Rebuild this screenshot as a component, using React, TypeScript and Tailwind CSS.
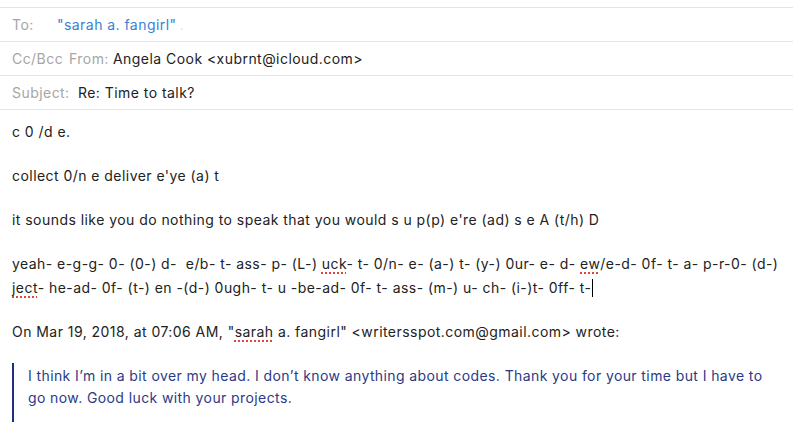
import React from "react";

const font = { fontFamily: "Inter, 'Noto Sans', sans-serif" };

function Typo({ children }: { children: React.ReactNode }) {
  return (
    <span className="underline decoration-dotted decoration-[#e0443a] decoration-[1.5px] underline-offset-[3px]">
      {children}
    </span>
  );
}

function HeaderRow({ children }: { children: React.ReactNode }) {
  return (
    <div className="flex h-[34px] items-center border-b border-[#e4e4e4] px-3 text-[14px] tracking-[0.45px]">
      {children}
    </div>
  );
}

export default function App() {
  return (
    <div className="min-h-screen w-full overflow-hidden bg-white pt-[7px] text-[#222]" style={font}>
      <div className="border-t border-[#e4e4e4]">
        <HeaderRow>
          <span className="w-[45px] text-[#a6a6a6]">To:</span>
          <span className="text-[#3a7fd5]">"sarah a. fangirl"</span>
          <span className="ml-[3px] text-[#d6e4f5]">.</span>
        </HeaderRow>
        <HeaderRow>
          <span className="w-[57px] text-[#a6a6a6]">Cc/Bcc</span>
          <span className="w-[44px] text-[#a6a6a6]">From:</span>
          <span>Angela Cook &lt;xubrnt@icloud.com&gt;</span>
        </HeaderRow>
        <HeaderRow>
          <span className="w-[66px] text-[#a6a6a6]">Subject:</span>
          <span>Re: Time to talk?</span>
        </HeaderRow>
      </div>

      <div className="pl-3 pr-2 pt-[11px] text-[14px] leading-[22px] tracking-[0.45px]">
        <p className="pr-1">c 0 /d e.</p>
        <p className="mt-[22px]">collect 0/n e deliver e'ye (a) t</p>
        <p className="mt-[22px]">
          it sounds like you do nothing to speak that you would s u p(p) e're (ad) s e A (t/h) D
        </p>
        <p className="mt-[22px] pr-1">
          yeah- e-g-g- 0- (0-) d-&nbsp; e/b- t- ass- p- (L-) <Typo>uck</Typo>- t- 0/n- e- (a-) t- (y-) 0ur- e- d-{" "}
          <Typo>ew</Typo>/e-d- 0f- t- a- p-r-0- (d-) <Typo>ject</Typo>- he-ad- 0f- (t-) en -(d-) 0ugh- t- u -be-ad- 0f-
          t- ass- (m-) u- ch- (i-)t- 0ff- t-
          <span className="ml-[1px] inline-block h-[18px] w-[1px] translate-y-[4px] bg-black" />
        </p>
        <p className="mt-[22px]">
          On Mar 19, 2018, at 07:06 AM, "<Typo>sarah</Typo> a. fangirl" &lt;writersspot.com@gmail.com&gt; wrote:
        </p>
        <blockquote className="mt-[20px] border-l-2 border-[#1b3080] pb-[20px] pl-[14px] pr-[18px] pt-[2px] tracking-[0.4px] text-[#2b3a86]">
          I think I’m in a bit over my head. I don’t know anything about codes. Thank you for your time but I have to go
          now. Good luck with your projects.
        </blockquote>
      </div>
    </div>
  );
}
